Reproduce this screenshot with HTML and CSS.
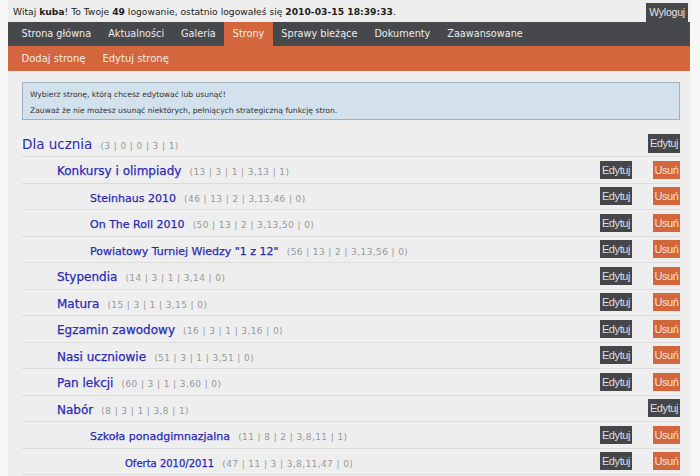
FILE: index.html
```html
<!DOCTYPE html>
<html lang="pl">
<head>
    <meta charset="UTF-8">
    <title>Strony</title>
    <link rel="stylesheet" href="styles.css">
</head>
<body>

<div class="page">
    <!-- Pasek powitalny -->
    <div class="topbar">
        <span>Witaj <b>kuba</b>! To Twoje <b>49</b> logowanie, ostatnio logowałeś się <b>2010-03-15 18:39:33</b>.</span>
        <a href="#" class="logout">Wyloguj</a>
    </div>

    <!-- Menu główne -->
    <ul class="nav">
        <li><a href="#">Strona główna</a></li>
        <li><a href="#">Aktualności</a></li>
        <li><a href="#">Galeria</a></li>
        <li class="active"><a href="#">Strony</a></li>
        <li><a href="#">Sprawy bieżące</a></li>
        <li><a href="#">Dokumenty</a></li>
        <li><a href="#">Zaawansowane</a></li>
    </ul>
    <ul class="subnav">
        <li><a href="#">Dodaj stronę</a></li>
        <li><a href="#">Edytuj stronę</a></li>
    </ul>

    <div class="content">
        <div class="info">
            <p>Wybierz stronę, którą chcesz edytować lub usunąć!</p>
            <p>Zauważ że nie możesz usunąć niektórych, pełniących strategiczną funkcję stron.</p>
        </div>

        <ul class="tree">
            <li class="row lvl0">
                <span class="title"><a href="#">Dla ucznia</a> <span class="ids">(3 | 0 | 0 | 3 | 1)</span></span>
                <span class="actions"><a href="#" class="btn">Edytuj</a></span>
            </li>
            <li class="row lvl1">
                <span class="title"><a href="#">Konkursy i olimpiady</a> <span class="ids">(13 | 3 | 1 | 3,13 | 1)</span></span>
                <span class="actions"><a href="#" class="btn">Edytuj</a><a href="#" class="btn del">Usuń</a></span>
            </li>
            <li class="row lvl2">
                <span class="title"><a href="#">Steinhaus 2010</a> <span class="ids">(46 | 13 | 2 | 3,13,46 | 0)</span></span>
                <span class="actions"><a href="#" class="btn">Edytuj</a><a href="#" class="btn del">Usuń</a></span>
            </li>
            <li class="row lvl2">
                <span class="title"><a href="#">On The Roll 2010</a> <span class="ids">(50 | 13 | 2 | 3,13,50 | 0)</span></span>
                <span class="actions"><a href="#" class="btn">Edytuj</a><a href="#" class="btn del">Usuń</a></span>
            </li>
            <li class="row lvl2">
                <span class="title"><a href="#">Powiatowy Turniej Wiedzy "1 z 12"</a> <span class="ids">(56 | 13 | 2 | 3,13,56 | 0)</span></span>
                <span class="actions"><a href="#" class="btn">Edytuj</a><a href="#" class="btn del">Usuń</a></span>
            </li>
            <li class="row lvl1">
                <span class="title"><a href="#">Stypendia</a> <span class="ids">(14 | 3 | 1 | 3,14 | 0)</span></span>
                <span class="actions"><a href="#" class="btn">Edytuj</a><a href="#" class="btn del">Usuń</a></span>
            </li>
            <li class="row lvl1">
                <span class="title"><a href="#">Matura</a> <span class="ids">(15 | 3 | 1 | 3,15 | 0)</span></span>
                <span class="actions"><a href="#" class="btn">Edytuj</a><a href="#" class="btn del">Usuń</a></span>
            </li>
            <li class="row lvl1">
                <span class="title"><a href="#">Egzamin zawodowy</a> <span class="ids">(16 | 3 | 1 | 3,16 | 0)</span></span>
                <span class="actions"><a href="#" class="btn">Edytuj</a><a href="#" class="btn del">Usuń</a></span>
            </li>
            <li class="row lvl1">
                <span class="title"><a href="#">Nasi uczniowie</a> <span class="ids">(51 | 3 | 1 | 3,51 | 0)</span></span>
                <span class="actions"><a href="#" class="btn">Edytuj</a><a href="#" class="btn del">Usuń</a></span>
            </li>
            <li class="row lvl1">
                <span class="title"><a href="#">Pan lekcji</a> <span class="ids">(60 | 3 | 1 | 3,60 | 0)</span></span>
                <span class="actions"><a href="#" class="btn">Edytuj</a><a href="#" class="btn del">Usuń</a></span>
            </li>
            <li class="row lvl1">
                <span class="title"><a href="#">Nabór</a> <span class="ids">(8 | 3 | 1 | 3,8 | 1)</span></span>
                <span class="actions"><a href="#" class="btn">Edytuj</a></span>
            </li>
            <li class="row lvl2">
                <span class="title"><a href="#">Szkoła ponadgimnazjalna</a> <span class="ids">(11 | 8 | 2 | 3,8,11 | 1)</span></span>
                <span class="actions"><a href="#" class="btn">Edytuj</a><a href="#" class="btn del">Usuń</a></span>
            </li>
            <li class="row lvl3">
                <span class="title"><a href="#">Oferta 2010/2011</a> <span class="ids">(47 | 11 | 3 | 3,8,11,47 | 0)</span></span>
                <span class="actions"><a href="#" class="btn">Edytuj</a><a href="#" class="btn del">Usuń</a></span>
            </li>
        </ul>
    </div>
</div>

</body>
</html>
```

FILE: styles.css
```css
body {
    margin: 0;
    padding: 0 10px 0 8px;
    background-color: #f7f7f7;
    font-family: "DejaVu Sans", Verdana, sans-serif;
    color: #222;
}
a {
    text-decoration: none;
}
ul {
    list-style: none;
    margin: 0;
    padding: 0;
}
.page {
    background-color: #eeeeee;
    min-height: 476px;
}
.topbar {
    display: flex;
    justify-content: space-between;
    align-items: flex-end;
    height: 22px;
    padding: 0 2px 0 5px;
    font-size: 9.2px;
}
.topbar span {
    padding-bottom: 5px;
}
.logout {
    font-family: "Liberation Sans", Arial, sans-serif;
    font-size: 10.5px;
    letter-spacing: -0.2px;
    color: #e4e4e4;
    background-color: #47484c;
    padding: 3px 3px 4px;
}
.nav, .subnav {
    display: flex;
    padding: 0 5px;
}
.nav {
    background-color: #47484c;
    height: 24px;
}
.subnav {
    background-color: #d3663c;
    height: 25px;
}
.nav a, .subnav a {
    display: block;
    padding: 0 8.5px;
    font-size: 9.7px;
    color: #ececec;
}
.nav a {
    line-height: 24px;
}
.subnav a {
    font-size: 10px;
    line-height: 25px;
}
.nav .active {
    background-color: #d3663c;
}
.content {
    padding: 11px 10px 0 14px;
}
.info {
    background-color: #d3e1ec;
    border: 1px solid #9fb0bf;
    padding: 7px 7px 4px;
    font-size: 7.6px;
    line-height: 9px;
    color: #333;
}
.info p {
    margin: 0;
}
.info p + p {
    margin-top: 7px;
}
.tree {
    margin-top: 10px;
}
.row {
    display: flex;
    justify-content: space-between;
    align-items: center;
    height: 25.5px;
    border-bottom: 1px solid #dcdcdc;
}
.row.lvl0 {
    height: 26px;
}
.title a {
    color: #2a2ab3;
    -webkit-text-stroke: 0.25px #2a2ab3;
}
.ids {
    margin-left: 3px;
    font-size: 9px;
    letter-spacing: 0.4px;
    color: #999;
}
.lvl0 .title a {
    font-size: 13.5px;
    -webkit-text-stroke: 0;
}
.lvl1 {
    padding-left: 35px;
}
.lvl1 .title a {
    font-size: 12px;
}
.lvl2 {
    padding-left: 68px;
}
.lvl2 .title a {
    font-size: 11px;
}
.lvl3 {
    padding-left: 103px;
}
.lvl3 .title a {
    font-size: 10px;
}
.actions {
    display: flex;
    gap: 21px;
}
.btn {
    display: block;
    width: 32px;
    text-align: center;
    font-family: "Liberation Sans", Arial, sans-serif;
    font-size: 11px;
    letter-spacing: -0.4px;
    line-height: 18px;
    color: #dedede;
    background-color: #45464a;
}
.lvl0 .btn {
    line-height: 19px;
}
.btn.del {
    width: 27px;
    background-color: #d3663c;
    color: #f5e0d6;
}
```
